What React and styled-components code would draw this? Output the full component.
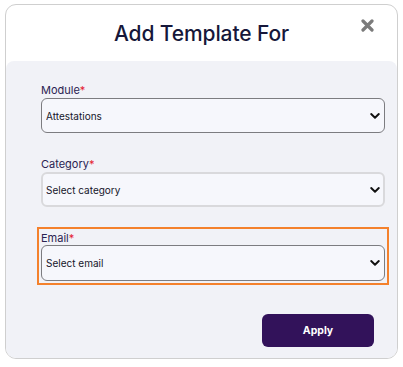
import styled, { createGlobalStyle } from "styled-components";

const GlobalStyle = createGlobalStyle`
  html, body {
    margin: 0;
    padding: 0;
    background: #fff;
  }
  body {
    font-family: Inter, "Noto Sans", Arial, sans-serif;
  }
  * {
    box-sizing: border-box;
  }
`;

function Chevron() {
  return (
    <StyledChevron viewBox="0 0 10 6" aria-hidden="true">
      <path
        d="M1.2 1.1 L5 4.7 L8.8 1.1"
        fill="none"
        stroke="#111"
        strokeWidth="2"
        strokeLinecap="round"
        strokeLinejoin="round"
      />
    </StyledChevron>
  );
}

function SelectField({ label, value, options, soft }) {
  return (
    <StyledField>
      <StyledLabel>
        {label}
        <StyledRequired>*</StyledRequired>
      </StyledLabel>
      <StyledSelectWrap>
        <StyledSelect $soft={soft} defaultValue={value}>
          {options.map((option) => (
            <option key={option}>{option}</option>
          ))}
        </StyledSelect>
        <Chevron />
      </StyledSelectWrap>
    </StyledField>
  );
}

export default function App() {
  return (
    <>
      <GlobalStyle />
      <StyledCard>
        <StyledHeader>
          <StyledTitle>Add Template For</StyledTitle>
          <StyledClose aria-label="Close">
            <svg viewBox="0 0 13 13" width="13" height="13">
              <path
                d="M2 2 L11 11 M11 2 L2 11"
                stroke="#7b7b7b"
                strokeWidth="3.2"
                strokeLinecap="round"
              />
            </svg>
          </StyledClose>
        </StyledHeader>

        <StyledBody>
          <SelectField
            label="Module"
            value="Attestations"
            options={["Attestations", "Onboarding", "Reviews"]}
          />
          <StyledGap $size={24} />
          <SelectField
            label="Category"
            value="Select category"
            options={["Select category"]}
            soft
          />
          <StyledGap $size={20} />
          <StyledHighlight>
            <SelectField
              label="Email"
              value="Select email"
              options={["Select email"]}
            />
          </StyledHighlight>
          <StyledFooter>
            <StyledApply>Apply</StyledApply>
          </StyledFooter>
        </StyledBody>
      </StyledCard>
    </>
  );
}

const StyledCard = styled.div`
  margin: 4px 0 0 5px;
  width: 393px;
  height: 355px;
  border: 1px solid #cfcfcf;
  border-radius: 11px;
  background: #fff;
  overflow: hidden;
  display: flex;
  flex-direction: column;
`;

const StyledHeader = styled.header`
  position: relative;
  height: 56px;
  flex: none;
  display: flex;
  align-items: center;
  justify-content: center;
`;

const StyledTitle = styled.h2`
  margin: 0;
  font-size: 21px;
  font-weight: 500;
  color: #16173a;
  letter-spacing: -0.1px;
`;

const StyledClose = styled.button`
  position: absolute;
  top: 14px;
  right: 23px;
  padding: 0;
  border: none;
  background: none;
  width: 13px;
  height: 13px;
  display: flex;
  cursor: pointer;
`;

const StyledBody = styled.main`
  flex: 1;
  background: #f1f2f7;
  border-radius: 8px 8px 0 0;
  padding: 22px 12px 11px 35px;
  display: flex;
  flex-direction: column;
`;

const StyledGap = styled.div`
  height: ${(p) => p.$size}px;
  flex: none;
`;

const StyledField = styled.div`
  display: flex;
  flex-direction: column;
`;

const StyledLabel = styled.label`
  font-size: 11px;
  line-height: 15px;
  color: #2b2352;
`;

const StyledRequired = styled.span`
  color: #e5202e;
`;

const StyledSelectWrap = styled.div`
  position: relative;
`;

const StyledSelect = styled.select`
  appearance: none;
  width: 100%;
  height: 35px;
  padding: 0 24px 0 ${(p) => (p.$soft ? "3px" : "4px")};
  border: ${(p) => (p.$soft ? "2px solid #d9d9dc" : "1px solid #7c7c80")};
  border-radius: 6px;
  background: #f6f7fc;
  font-family: Inter, "Noto Sans", Arial, sans-serif;
  font-size: 10px;
  color: #15152a;
  outline: none;
`;

const StyledChevron = styled.svg`
  position: absolute;
  right: 5px;
  top: 50%;
  width: 10px;
  height: 6px;
  margin-top: -3px;
  pointer-events: none;
`;

const StyledHighlight = styled.div`
  margin: 0 -4px;
  padding: 2px 2px 2px;
  border: 2px solid #f4812c;

  label {
    line-height: 14px;
  }

  select {
    height: 36px;
  }
`;

const StyledFooter = styled.div`
  margin-top: 29px;
  display: flex;
  justify-content: flex-end;
  padding-right: 11px;
`;

const StyledApply = styled.button`
  width: 112px;
  height: 33px;
  border: none;
  border-radius: 6px;
  background: #32125a;
  color: #fff;
  font-family: Inter, "Noto Sans", Arial, sans-serif;
  font-size: 10.5px;
  font-weight: 700;
  cursor: pointer;
`;
